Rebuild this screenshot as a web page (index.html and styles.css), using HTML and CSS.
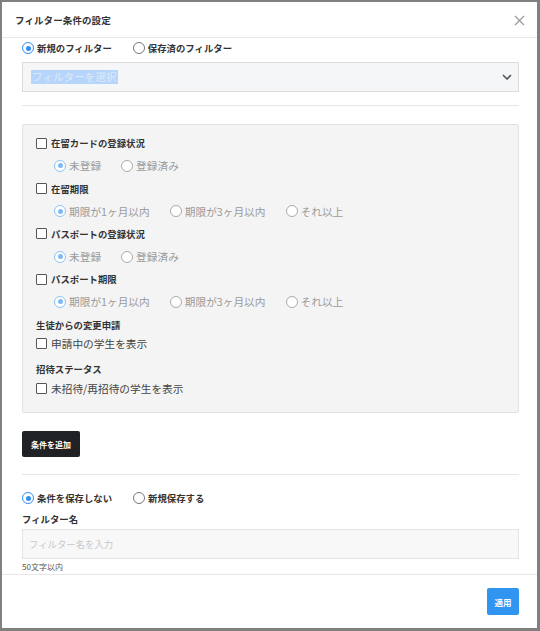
FILE: index.html
```html
<!DOCTYPE html>
<html lang="ja">
<head>
<meta charset="utf-8">
<title>フィルター条件の設定</title>
<link rel="stylesheet" href="styles.css">
</head>
<body>
<div class="modal">
  <div class="modal-header">
    <div class="modal-title">フィルター条件の設定</div>
    <svg class="close" width="11" height="11" viewBox="0 0 11 11"><path d="M1 1L10 10M10 1L1 10" stroke="#9a9a9a" stroke-width="1.2" fill="none"/></svg>
  </div>
  <div class="modal-body">
    <div class="radio-row top">
      <label class="opt"><span class="radio on"></span><span class="bold">新規のフィルター</span></label>
      <label class="opt"><span class="radio"></span><span class="bold">保存済のフィルター</span></label>
    </div>
    <div class="select">
      <span class="sel-text">フィルターを選択</span>
      <svg class="chev" width="10" height="6" viewBox="0 0 10 6"><path d="M1 1L5 5L9 1" stroke="#555" stroke-width="1.6" fill="none"/></svg>
    </div>
    <div class="hr hr1"></div>
    <div class="panel">
      <div class="row"><span class="check"></span><span class="bold">在留カードの登録状況</span></div>
      <div class="row sub">
        <label class="opt"><span class="radio soft on"></span>未登録</label>
        <label class="opt"><span class="radio soft"></span>登録済み</label>
      </div>
      <div class="row"><span class="check"></span><span class="bold">在留期限</span></div>
      <div class="row sub">
        <label class="opt"><span class="radio soft on"></span>期限が1ヶ月以内</label>
        <label class="opt"><span class="radio soft"></span>期限が3ヶ月以内</label>
        <label class="opt"><span class="radio soft"></span>それ以上</label>
      </div>
      <div class="row"><span class="check"></span><span class="bold">パスポートの登録状況</span></div>
      <div class="row sub">
        <label class="opt"><span class="radio soft on"></span>未登録</label>
        <label class="opt"><span class="radio soft"></span>登録済み</label>
      </div>
      <div class="row"><span class="check"></span><span class="bold">パスポート期限</span></div>
      <div class="row sub">
        <label class="opt"><span class="radio soft on"></span>期限が1ヶ月以内</label>
        <label class="opt"><span class="radio soft"></span>期限が3ヶ月以内</label>
        <label class="opt"><span class="radio soft"></span>それ以上</label>
      </div>
      <div class="row"><span class="bold">生徒からの変更申請</span></div>
      <div class="crow"><span class="check"></span><span class="plain">申請中の学生を表示</span></div>
      <div class="row gap"><span class="bold">招待ステータス</span></div>
      <div class="crow"><span class="check"></span><span class="plain">未招待/再招待の学生を表示</span></div>
    </div>
    <button class="btn-dark">条件を追加</button>
    <div class="hr hr2"></div>
    <div class="radio-row save">
      <label class="opt"><span class="radio on"></span><span class="bold">条件を保存しない</span></label>
      <label class="opt"><span class="radio"></span><span class="bold">新規保存する</span></label>
    </div>
    <div class="field-label bold">フィルター名</div>
    <div class="input">フィルター名を入力</div>
    <div class="hint">50文字以内</div>
  </div>
  <div class="modal-footer">
    <button class="btn-primary">適用</button>
  </div>
</div>
</body>
</html>
```
FILE: styles.css
```css
* { box-sizing: border-box; }
html, body { margin: 0; padding: 0; }
body {
  width: 540px;
  height: 631px;
  background: #808080;
  padding: 2px 3px 3px 2px;
  font-family: "Noto Sans CJK JP", "Noto Sans", sans-serif;
  color: #333;
  overflow: hidden;
}
.modal {
  width: 535px;
  height: 626px;
  background: #fff;
  display: flex;
  flex-direction: column;
}
.modal-header {
  height: 36px;
  border-bottom: 1px solid #e8e8e8;
  display: flex;
  align-items: center;
  justify-content: space-between;
  padding: 0 12px 0 13px;
  flex-shrink: 0;
}
.modal-title {
  font-size: 9.5px;
  font-weight: 700;
  color: #333;
  letter-spacing: 0.1px;
}
.close { margin-top: 1px; }
.modal-body {
  flex: 1;
  padding: 2px 18px 0 20px;
}
.bold { font-weight: 700; font-size: 9.4px; color: #333; }
.radio-row {
  display: flex;
  align-items: center;
  gap: 21px;
  height: 16px;
}
.opt {
  display: flex;
  align-items: center;
  gap: 3px;
}
.radio {
  width: 12px;
  height: 12px;
  border-radius: 50%;
  border: 1px solid #777;
  background: #fff;
  position: relative;
  flex-shrink: 0;
}
.radio.on { border-color: #2f8ff0; }
.radio.on::after {
  content: "";
  position: absolute;
  left: 2.5px; top: 2.5px;
  width: 5px; height: 5px;
  border-radius: 50%;
  background: #2f8ff0;
}
.radio.soft { border-color: #aaa; }
.radio.soft.on { border-color: #8ec3f5; }
.radio.soft.on::after { background: #7fb9f2; }
.select {
  margin-top: 6px;
  height: 30px;
  background: #f5f6f8;
  border: 1px solid #dcdcdc;
  display: flex;
  align-items: center;
  justify-content: space-between;
  padding: 0 6px 0 8px;
}
.sel-text {
  background: #b6d5fb;
  color: #dde9f7;
  font-size: 10.6px;
  line-height: 14px;
  padding: 0 1px;
}
.hr { height: 1px; background: #e6e6e6; }
.hr1 { margin-top: 13px; }
.panel {
  margin-top: 18px;
  height: 289px;
  background: #f4f4f4;
  border: 1px solid #e2e2e2;
  border-radius: 2px;
  padding: 7px 13px 0 13px;
}
.row {
  height: 22.67px;
  display: flex;
  align-items: center;
  gap: 4px;
}
.row.sub {
  padding-left: 18px;
  gap: 20px;
  font-size: 10.7px;
  color: #9a9a9a;
}
.row.gap { margin-top: 6px; }
.crow {
  height: 16px;
  display: flex;
  align-items: center;
  gap: 4px;
}
.check {
  width: 11px;
  height: 11px;
  border: 1px solid #555;
  border-radius: 1px;
  background: #fff;
  flex-shrink: 0;
}
.plain { font-size: 10.7px; color: #444; }
.btn-dark {
  margin-top: 18px;
  width: 58px;
  height: 26px;
  background: #1f2124;
  color: #fff;
  border: none;
  border-radius: 2px;
  font-family: inherit;
  font-size: 8px;
  font-weight: 700;
  padding: 0;
  display: block;
}
.hr2 { margin-top: 17px; }
.radio-row.save { margin-top: 15px; }
.field-label { margin-top: 5px; height: 16px; line-height: 16px; }
.input {
  margin-top: 2px;
  height: 30px;
  background: #f8f8f8;
  border: 1px solid #e4e4e4;
  display: flex;
  align-items: center;
  padding-left: 6px;
  font-size: 9.4px;
  color: #c8c8c8;
}
.hint {
  margin-top: 2px;
  font-size: 8px;
  color: #555;
  height: 12px;
  line-height: 12px;
}
.modal-footer {
  flex-shrink: 0;
  height: 54px;
  border-top: 1px solid #e6e6e6;
  display: flex;
  justify-content: flex-end;
  align-items: flex-start;
  padding: 13px 18px 0 0;
}
.btn-primary {
  width: 32px;
  height: 27px;
  background: #2f95f0;
  color: #fff;
  border: none;
  border-radius: 2px;
  font-family: inherit;
  font-size: 8.5px;
  font-weight: 700;
  padding: 0;
}
```
